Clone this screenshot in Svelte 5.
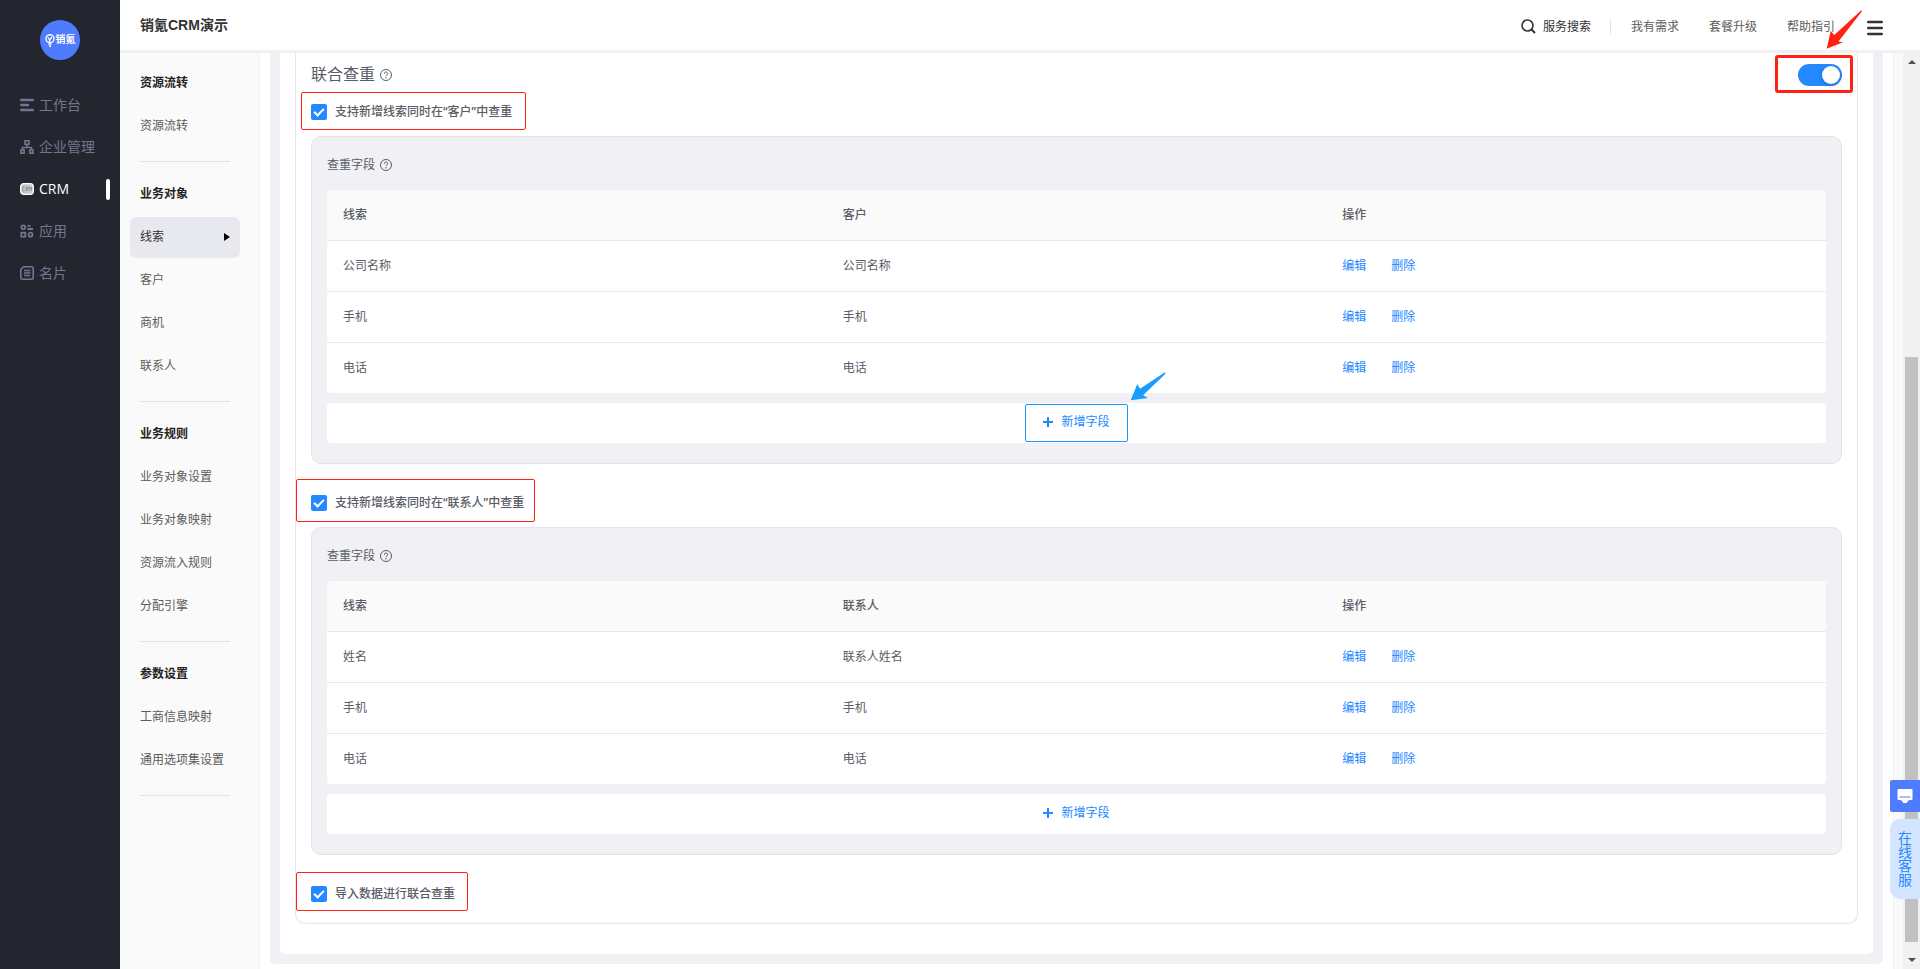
<script lang="ts">
	const navItems = [
		{ icon: 'desk', label: '工作台' },
		{ icon: 'org', label: '企业管理' },
		{ icon: 'crm', label: 'CRM' },
		{ icon: 'apps', label: '应用' },
		{ icon: 'card', label: '名片' }
	];

	const menuGroups = [
		{ title: '资源流转', items: ['资源流转'] },
		{ title: '业务对象', items: ['线索', '客户', '商机', '联系人'] },
		{ title: '业务规则', items: ['业务对象设置', '业务对象映射', '资源流入规则', '分配引擎'] },
		{ title: '参数设置', items: ['工商信息映射', '通用选项集设置'] }
	];

	const helpLinks = ['我有需求', '套餐升级', '帮助指引'];

	let sections = $state([
		{
			id: 'customer',
			label: '支持新增线索同时在“客户”中查重',
			target: '客户',
			checked: true,
			highlightAdd: true,
			rows: [
				['公司名称', '公司名称'],
				['手机', '手机'],
				['电话', '电话']
			]
		},
		{
			id: 'contact',
			label: '支持新增线索同时在“联系人”中查重',
			target: '联系人',
			checked: true,
			highlightAdd: false,
			rows: [
				['姓名', '联系人姓名'],
				['手机', '手机'],
				['电话', '电话']
			]
		}
	]);

	let activeNav = $state('CRM');
	let activeMenu = $state('线索');
	let unionEnabled = $state(true);
	let importChecked = $state(true);

	function removeRow(section: { rows: string[][] }, index: number) {
		section.rows.splice(index, 1);
	}
</script>

{#snippet help()}
	<svg class="help" viewBox="0 0 12 12" aria-hidden="true">
		<circle cx="6" cy="6" r="5.5" fill="none" stroke="currentColor" stroke-width="1" />
		<path d="M4.3 4.8C4.3 2.4 7.7 2.5 7.7 4.7C7.7 5.9 6 5.8 6 7.2" fill="none" stroke="currentColor" stroke-width="1" />
		<circle cx="6" cy="8.8" r="0.7" fill="currentColor" />
	</svg>
{/snippet}

<div class="app">
	<aside class="sidebar">
		<div class="logo">
			<svg viewBox="0 0 10 13" aria-hidden="true">
				<circle cx="5" cy="4.8" r="4" fill="none" stroke="#fff" stroke-width="1.4" />
				<path d="M3 3.5L4.6 6L7 3M4.6 6V9.5M3.3 10.2H6.5M4 12H6" fill="none" stroke="#fff" stroke-width="1.3" />
			</svg>
			<span>销氪</span>
		</div>
		<nav>
			{#each navItems as item}
				<button class="nav-item" class:active={activeNav === item.label} onclick={() => (activeNav = item.label)}>
					<svg class="nav-icon" viewBox="0 0 14 14" fill="none" stroke="currentColor" aria-hidden="true">
						{#if item.icon === 'desk'}
							<path d="M1.2 2H12.8M1.2 7H8M1.2 12H12.8" stroke-width="2.4" stroke-linecap="round" />
						{:else if item.icon === 'org'}
							<rect x="5" y="0.8" width="4" height="3.4" stroke-width="1.6" />
							<rect x="0.9" y="10" width="3.2" height="3.2" stroke-width="1.6" />
							<rect x="9.9" y="10" width="3.2" height="3.2" stroke-width="1.6" />
							<path d="M7 4V7.5M2.5 10V7.5H11.5V10" stroke-width="1.6" />
						{:else if item.icon === 'crm'}
							<rect x="0.7" y="1.7" width="12.6" height="10.6" rx="3" fill="#c9c9cd" stroke-width="1.3" />
							<path d="M4.7 5H2.7V9H4.7M6 9V5H8V7H6L8 9M9.3 9V5L10.4 6.5L11.5 5V9" stroke="#85858c" stroke-width="0.8" />
						{:else if item.icon === 'apps'}
							<circle cx="3.3" cy="3.3" r="2" stroke-width="1.8" />
							<rect x="1.3" y="8.7" width="4" height="4" stroke-width="1.7" />
							<circle cx="10.5" cy="10.7" r="2" stroke-width="1.8" />
							<path d="M7.5 1.8H10.5M7.5 5H13" stroke-width="1.8" />
						{:else}
							<path d="M3.5 0.8H11.5Q13.2 0.8 13.2 2.5V11.5Q13.2 13.2 11.5 13.2H2.5Q0.8 13.2 0.8 11.5V3.5Z" stroke-width="1.6" />
							<path d="M4 4.5H10.5M4 7H10.5M4 9.5H10" stroke-width="1.3" />
						{/if}
					</svg>
					{item.label}
				</button>
			{/each}
		</nav>
	</aside>

	<div class="page">
		<header class="topbar">
			<h1>销氪CRM演示</h1>
			<div class="tools">
				<button class="search">
					<svg viewBox="0 0 15 15" aria-hidden="true">
						<circle cx="6.5" cy="6.5" r="5.5" fill="none" stroke="currentColor" stroke-width="1.6" />
						<path d="M10.5 10.5L14 14" stroke="currentColor" stroke-width="2" />
					</svg>
					服务搜索
				</button>
				{#each helpLinks as link}
					<a href="#help">{link}</a>
				{/each}
				<button class="burger" aria-label="菜单">
					<svg viewBox="0 0 16 16" aria-hidden="true">
						<path d="M1.2 2H14.8M1.2 8H14.8M1.2 14H14.8" stroke="currentColor" stroke-width="2.4" stroke-linecap="round" />
					</svg>
				</button>
			</div>
		</header>

		<div class="body">
			<nav class="submenu">
				{#each menuGroups as group}
					<section>
						<h2>{group.title}</h2>
						{#each group.items as item}
							<button class="menu-item" class:active={activeMenu === item} onclick={() => (activeMenu = item)}>
								{item}
								{#if activeMenu === item}<span class="caret"></span>{/if}
							</button>
						{/each}
					</section>
				{/each}
			</nav>

			<main>
				<div class="frame">
					<div class="sheet">
						<div class="rule-card">
							<div class="rule-head">
								<h3>联合查重</h3>
								{@render help()}
								<div class="switch-wrap">
									<input class="switch" type="checkbox" role="switch" aria-label="联合查重" bind:checked={unionEnabled} />
									<span class="mark mark-switch"></span>
									<svg class="arrow arrow-red" viewBox="0 0 36 39" aria-hidden="true">
										<path d="M0.7 38.7L4.7 21L8.3 25L35 0.6Q36.2 0.4 35.6 1.8L12.5 31.5L17 32.3Z" fill="#ff2212" />
									</svg>
								</div>
							</div>

							{#each sections as section}
								<div class="option">
									<label class="check">
										<input type="checkbox" bind:checked={section.checked} />
										{section.label}
										<span class="mark mark-{section.id}"></span>
									</label>
									<div class="panel">
										<div class="panel-label">查重字段 {@render help()}</div>
										<div class="table-wrap">
											<table>
												<thead>
													<tr>
														<th>线索</th>
														<th>{section.target}</th>
														<th>操作</th>
													</tr>
												</thead>
												<tbody>
													{#each section.rows as row, i}
														<tr>
															<td>{row[0]}</td>
															<td>{row[1]}</td>
															<td>
																<div class="actions">
																	<button>编辑</button>
																	<button onclick={() => removeRow(section, i)}>删除</button>
																</div>
															</td>
														</tr>
													{/each}
												</tbody>
											</table>
										</div>
										<div class="add-bar">
											<button class="add">
												<svg viewBox="0 0 10 10" aria-hidden="true">
													<path d="M0 5H10M5 0V10" stroke="currentColor" stroke-width="2" />
												</svg>
												新增字段
												{#if section.highlightAdd}
													<span class="mark mark-add"></span>
												{/if}
											</button>
											{#if section.highlightAdd}
												<svg class="arrow arrow-blue" viewBox="0 0 36 29" aria-hidden="true">
													<path d="M0.7 28.3L7.3 12L10 16.7L34.6 0.6Q36 0.6 35.3 2L13 23.3L18 26Z" fill="#1a9cff" />
												</svg>
											{/if}
										</div>
									</div>
								</div>
							{/each}

							<label class="check">
								<input type="checkbox" bind:checked={importChecked} />
								导入数据进行联合查重
								<span class="mark mark-import"></span>
							</label>
						</div>
					</div>
				</div>
			</main>

			<div class="gutter"></div>
			<div class="scrollbar" aria-hidden="true">
				<span class="tri up"></span>
				<span class="thumb"></span>
				<span class="tri down"></span>
			</div>
		</div>
	</div>

	<div class="service">
		<button class="service-icon" aria-label="客服">
			<svg viewBox="0 0 16 14" aria-hidden="true">
				<path d="M1.5 0H14.5Q15.5 0 15.5 1V10Q15.5 11 14.5 11H11.5V12.5H10V14H6V12.5H4.5V11H1.5Q0.5 11 0.5 10V1Q0.5 0 1.5 0Z" fill="#fff" />
				<path d="M2.5 8H13.5" stroke="#4f7bff" stroke-width="1" />
			</svg>
		</button>
		<button class="service-text">在线客服</button>
	</div>
</div>

<style>
	:global(body) {
		background: #fff;
		font-family: 'Liberation Sans', 'Noto Sans CJK SC', sans-serif;
		font-size: 12px;
		line-height: 16px;
		color: #5a5c66;
	}

	button {
		padding: 0;
		border: none;
		background: none;
		font: inherit;
		color: inherit;
		cursor: pointer;
	}

	h1,
	h2,
	h3 {
		margin: 0;
	}

	.app {
		display: flex;
		min-height: 100vh;
	}

	.sidebar {
		flex: 0 0 120px;
		background: #23252f;
	}

	.logo {
		display: flex;
		align-items: center;
		justify-content: center;
		gap: 1px;
		width: 40px;
		height: 40px;
		margin: 20px auto 24px;
		border-radius: 50%;
		background: #4f7bff;
		color: #fff;
		font-size: 10px;
		font-weight: 700;
	}

	.logo svg {
		width: 10px;
		height: 13px;
	}

	.nav-item {
		display: flex;
		align-items: center;
		gap: 5px;
		position: relative;
		width: 100%;
		height: 42px;
		padding-left: 20px;
		font-family: 'Open Sans', 'Noto Sans CJK SC', sans-serif;
		font-size: 14px;
		color: #74768f;
	}

	.nav-item.active {
		color: #fff;
	}

	.nav-item.active::after {
		content: '';
		position: absolute;
		right: 10px;
		top: 11px;
		width: 4px;
		height: 21px;
		border-radius: 2px;
		background: #fff;
	}

	.nav-icon {
		width: 14px;
		height: 14px;
	}

	.page {
		display: flex;
		flex-direction: column;
		flex: 1;
		min-width: 0;
	}

	.topbar {
		display: flex;
		align-items: center;
		justify-content: space-between;
		height: 50px;
		padding: 0 37px 0 20px;
		border-bottom: 3px solid #f1f1f4;
	}

	.topbar h1 {
		font-size: 14px;
		font-weight: 700;
		color: #333;
	}

	.tools {
		display: flex;
		align-items: center;
		gap: 30px;
		padding-top: 3px;
	}

	.tools a {
		color: #5c5c5c;
		text-decoration: none;
	}

	.search {
		display: flex;
		align-items: center;
		gap: 7px;
		margin-right: -10px;
		padding-right: 19px;
		border-right: 1px solid #e4e4e6;
		line-height: 14px;
		color: #333;
	}

	.search svg {
		width: 15px;
		height: 15px;
	}

	.burger {
		display: flex;
		margin: 3px 0 0 2px;
		color: #333;
	}

	.burger svg {
		width: 16px;
		height: 16px;
	}

	.body {
		display: flex;
		flex: 1;
	}

	.submenu {
		flex: 0 0 140px;
		box-sizing: border-box;
		padding: 10px 20px 0 10px;
		background: #fafafa;
		box-shadow: inset -2px 0 2px -1px #f1f1f3;
	}

	.submenu section {
		display: flex;
		flex-direction: column;
		gap: 2px;
		margin-bottom: 12px;
	}

	.submenu section::after {
		content: '';
		height: 1px;
		margin: 12px 10px 0;
		background: #e2e2e4;
	}

	.submenu h2,
	.menu-item {
		display: flex;
		align-items: center;
		justify-content: space-between;
		box-sizing: border-box;
		height: 41px;
		padding: 0 10px 1px;
		font-size: 12px;
	}

	.submenu h2 {
		color: #222;
	}

	.menu-item {
		border-radius: 6px;
		color: #5c5c5c;
	}

	.menu-item.active {
		background: #e8e8ef;
		color: #333;
	}

	.caret {
		border-left: 6px solid #000;
		border-top: 4px solid transparent;
		border-bottom: 4px solid transparent;
	}

	main {
		flex: 1;
		min-width: 0;
		padding: 0 10px 5px;
	}

	.frame {
		padding: 0 10px 10px;
		border-radius: 0 0 5px 5px;
		background: #f0f0f5;
	}

	.sheet {
		padding: 0 15px 30px;
		border-radius: 0 0 5px 5px;
		background: #fff;
	}

	.rule-card {
		padding: 10px 15px 21px;
		border: 1px solid #e6e6e8;
		border-top: none;
		border-radius: 0 0 10px 10px;
	}

	.rule-head {
		display: flex;
		align-items: center;
		gap: 5px;
		height: 24px;
		margin-bottom: 17px;
	}

	.rule-head h3 {
		font-size: 16px;
		font-weight: 400;
	}

	.help {
		width: 12px;
		height: 12px;
	}

	.switch-wrap {
		display: flex;
		position: relative;
		margin-left: auto;
	}

	.switch {
		appearance: none;
		display: flex;
		justify-content: flex-start;
		box-sizing: border-box;
		width: 44px;
		height: 22px;
		margin: 0;
		padding: 2px;
		border-radius: 11px;
		background: #bfbfbf;
	}

	.switch:checked {
		justify-content: flex-end;
		background: #2488ff;
	}

	.switch::before {
		content: '';
		width: 18px;
		height: 18px;
		border-radius: 50%;
		background: #fff;
		box-shadow: 0 2px 4px rgba(0, 35, 11, 0.2);
	}

	.mark {
		position: absolute;
		border: 1px solid #ff2212;
		border-radius: 2px;
		pointer-events: none;
	}

	.mark-switch {
		inset: -9px -11px -7px -23px;
		border-width: 3px;
		border-radius: 3px;
	}

	.mark-customer {
		inset: -12px -14px -10px -10px;
	}

	.mark-contact {
		inset: -16px -11px -11px -15px;
	}

	.mark-import {
		inset: -14px -13px -9px -15px;
	}

	.mark-add {
		inset: 1px -18px;
		border-color: #1a9cff;
	}

	.arrow {
		position: absolute;
		pointer-events: none;
	}

	.arrow-red {
		left: 28px;
		bottom: 37px;
		width: 36px;
		height: 39px;
	}

	.arrow-blue {
		left: calc(50% + 53px);
		bottom: 42px;
		width: 36px;
		height: 29px;
	}

	.option {
		margin-bottom: 31px;
	}

	.check {
		display: flex;
		align-items: center;
		gap: 8px;
		position: relative;
		width: fit-content;
		height: 16px;
		font-family: 'Noto Sans', 'Noto Sans CJK SC', sans-serif;
		font-weight: 500;
	}

	.check input {
		appearance: none;
		display: flex;
		justify-content: center;
		width: 16px;
		height: 16px;
		margin: 0;
		border-radius: 2px;
		background: #dcdce0;
	}

	.check input:checked {
		background: #2488ff;
	}

	.check input:checked::before {
		content: '';
		width: 4px;
		height: 8px;
		margin-top: 2px;
		border: solid #fff;
		border-width: 0 2px 2px 0;
		transform: rotate(45deg);
	}

	.panel {
		margin-top: 16px;
		padding: 16px 15px 20px;
		border: 1px solid #e4e4e8;
		border-radius: 10px;
		background: #f0f0f5;
	}

	.panel-label {
		display: flex;
		align-items: center;
		gap: 5px;
		height: 24px;
		margin-bottom: 13px;
	}

	.table-wrap {
		overflow: hidden;
		border-radius: 4px;
		background: #fff;
	}

	table {
		width: 100%;
		table-layout: fixed;
		border-spacing: 0;
	}

	th,
	td {
		box-sizing: border-box;
		height: 51px;
		padding: 0 16px 1px;
		border-bottom: 1px solid #e8e8ea;
		text-align: left;
	}

	th {
		background: #fafafa;
		font-weight: 500;
	}

	tbody tr:last-child td {
		height: 50px;
		border-bottom: none;
	}

	.actions {
		display: flex;
		gap: 25px;
		color: #2488ff;
	}

	.add-bar {
		display: flex;
		justify-content: center;
		position: relative;
		height: 40px;
		margin-top: 10px;
		border-radius: 4px;
		background: #fff;
	}

	.add {
		display: flex;
		align-items: center;
		gap: 8px;
		position: relative;
		padding-bottom: 2px;
		color: #2488ff;
	}

	.add svg {
		width: 10px;
		height: 10px;
	}

	.gutter {
		flex: 0 0 10px;
		background: #fafafa;
		box-shadow: inset 2px 0 2px -1px #f1f1f3;
	}

	.scrollbar {
		display: flex;
		flex-direction: column;
		align-items: center;
		flex: 0 0 17px;
		background: #f1f1f1;
	}

	.scrollbar::before {
		content: '';
		order: 1;
		flex: 293;
	}

	.thumb {
		order: 2;
		flex: 585;
		width: 13px;
		background: #c1c1c1;
	}

	.tri {
		border: 4px solid transparent;
	}

	.up {
		order: 0;
		margin-top: 3px;
		border-bottom-color: #505050;
	}

	.down {
		order: 3;
		margin: 16px 0 3px;
		border-top-color: #505050;
	}

	.service {
		display: flex;
		flex-direction: column;
		gap: 7px;
		position: fixed;
		right: 0;
		bottom: 70px;
		width: 30px;
	}

	.service-icon {
		display: flex;
		align-items: center;
		justify-content: center;
		height: 32px;
		border-radius: 2px 0 0 2px;
		background: #4f7bff;
	}

	.service-icon svg {
		width: 16px;
		height: 14px;
	}

	.service-text {
		height: 80px;
		padding: 0 8px;
		border-radius: 10px 0 0 10px;
		background: #d4e6ff;
		font-size: 14px;
		line-height: 14px;
		color: #2488ff;
	}
</style>
